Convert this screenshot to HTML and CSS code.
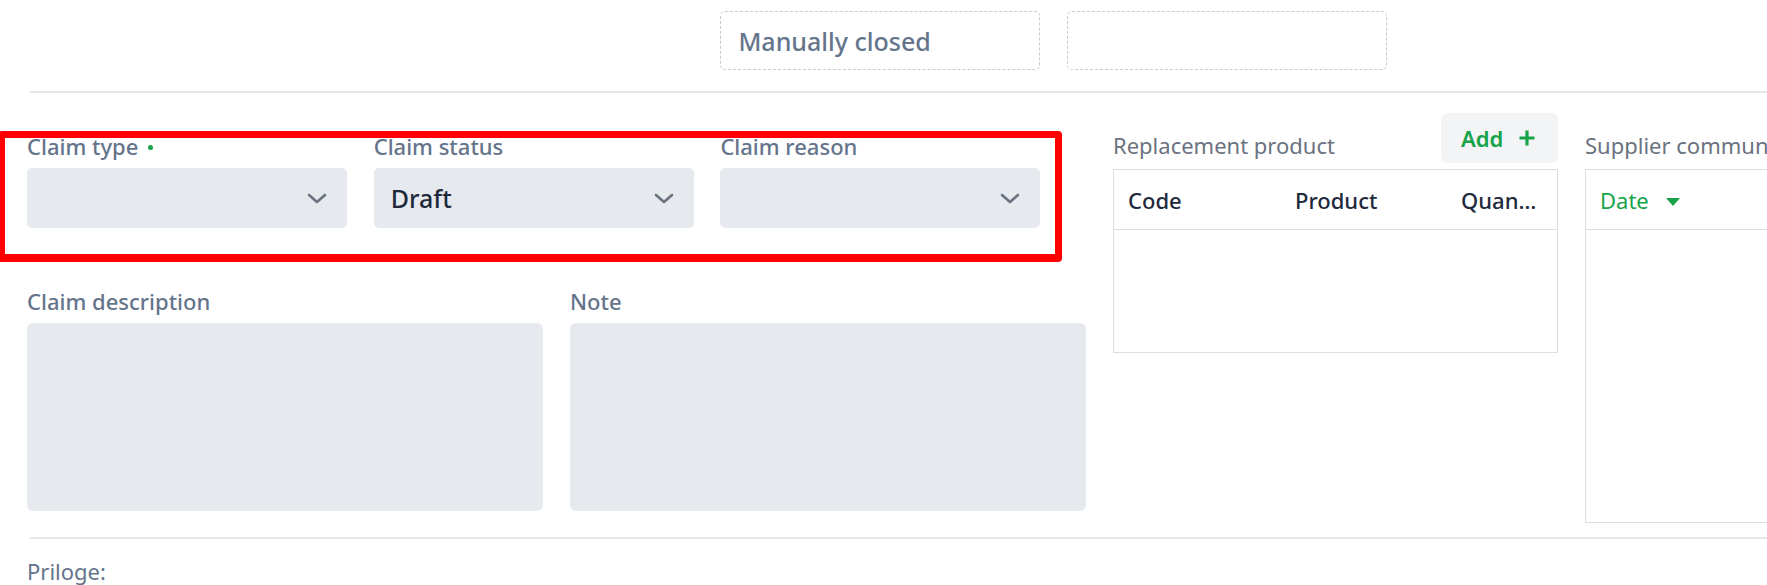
FILE: index.html
```html
<!DOCTYPE html>
<html lang="en">
<head>
<meta charset="utf-8">
<title>Claim</title>
<link rel="stylesheet" href="styles.css">
</head>
<body>
<div class="page">
  <div class="top-row">
    <div class="ro-box ro-box--c3">Manually closed</div>
    <div class="ro-box ro-box--c4"></div>
  </div>
  <div class="divider divider--top"></div>

  <div class="main">
    <div class="form">
      <div class="selects">
        <div class="field">
          <div class="label">Claim type<span class="req-dot"></span></div>
          <div class="select">
            <span class="select-value"></span>
            <svg class="chevron" width="20" height="11" viewBox="0 0 20 11"><path d="M2 2 L10 9 L18 2" fill="none" stroke="#6b7280" stroke-width="2.6" stroke-linecap="round" stroke-linejoin="round"/></svg>
          </div>
        </div>
        <div class="field">
          <div class="label">Claim status</div>
          <div class="select">
            <span class="select-value">Draft</span>
            <svg class="chevron" width="20" height="11" viewBox="0 0 20 11"><path d="M2 2 L10 9 L18 2" fill="none" stroke="#6b7280" stroke-width="2.6" stroke-linecap="round" stroke-linejoin="round"/></svg>
          </div>
        </div>
        <div class="field">
          <div class="label">Claim reason</div>
          <div class="select">
            <span class="select-value"></span>
            <svg class="chevron" width="20" height="11" viewBox="0 0 20 11"><path d="M2 2 L10 9 L18 2" fill="none" stroke="#6b7280" stroke-width="2.6" stroke-linecap="round" stroke-linejoin="round"/></svg>
          </div>
        </div>
      </div>
      <div class="texts">
        <div class="field">
          <div class="label">Claim description</div>
          <div class="textbox"></div>
        </div>
        <div class="field">
          <div class="label">Note</div>
          <div class="textbox"></div>
        </div>
      </div>
    </div>

    <div class="panel">
      <div class="panel-head">
        <span class="panel-title">Replacement product</span>
        <button class="add-btn">Add<svg width="18" height="18" viewBox="0 0 18 18"><path d="M9 1.5 V16.5 M1.5 9 H16.5" stroke="#16a34a" stroke-width="3.2" fill="none"/></svg></button>
      </div>
      <div class="grid">
        <div class="grid-head">
          <div class="cell cell--code">Code</div>
          <div class="cell cell--product">Product</div>
          <div class="cell cell--qty">Quantity</div>
        </div>
        <div class="grid-body grid-body--short"></div>
      </div>
    </div>

    <div class="panel panel--supplier">
      <div class="panel-head">
        <span class="panel-title">Supplier communication</span>
      </div>
      <div class="grid">
        <div class="grid-head">
          <div class="cell cell--date">Date<span class="sort-down"></span></div>
        </div>
        <div class="grid-body grid-body--tall"></div>
      </div>
    </div>
  </div>

  <div class="divider divider--bottom"></div>
  <div class="attachments">Priloge:</div>

  <div class="highlight"></div>
</div>
</body>
</html>
```

FILE: styles.css
```css
html, body {
  margin: 0;
  padding: 0;
  background: #ffffff;
  overflow: hidden;
}

body {
  font-family: "Noto Sans", "Open Sans", sans-serif;
  color: #1e293b;
}

.page {
  position: relative;
  padding-left: 27px;
  width: 2100px;
}

/* top read-only boxes */
.top-row {
  display: grid;
  grid-template-columns: repeat(4, 320px);
  column-gap: 26.7px;
  padding-top: 11px;
}

.ro-box {
  box-sizing: border-box;
  height: 59px;
  border: 1px dashed #c6cbd2;
  border-radius: 5px;
  padding-left: 17px;
  display: flex;
  align-items: center;
  font-size: 25px;
  font-weight: 500;
  color: #64748b;
}

.ro-box--c3 { grid-column: 3; }
.ro-box--c4 { grid-column: 4; }

.divider {
  height: 2px;
  background: #e5e7eb;
  margin-left: 3px;
}

.divider--top { margin-top: 21px; }
.divider--bottom { margin-top: 14px; }

/* main area */
.main {
  display: flex;
  align-items: flex-start;
  margin-top: 20px;
}

.form {
  flex: 0 0 1060px;
  min-width: 0;
  padding-top: 19px;
}

.selects {
  display: grid;
  grid-template-columns: repeat(3, 320px);
  column-gap: 26.7px;
}

.texts {
  display: grid;
  grid-template-columns: 516px 516px;
  column-gap: 27px;
  margin-top: 59px;
}

.label {
  font-size: 22px;
  line-height: 28px;
  font-weight: 500;
  color: #64748b;
  margin-bottom: 8px;
  white-space: nowrap;
}

.req-dot {
  display: inline-block;
  width: 5px;
  height: 5px;
  border-radius: 50%;
  background: #16a34a;
  margin-left: 10px;
  vertical-align: middle;
  position: relative;
  top: -2px;
}

.select {
  box-sizing: border-box;
  height: 60px;
  background: #e6e9ee;
  border-radius: 5px;
  padding: 0 20px 0 17px;
  display: flex;
  align-items: center;
  justify-content: space-between;
}

.select-value {
  font-size: 25px;
  font-weight: 500;
  color: #1e293b;
}

.chevron { display: block; flex: none; }

.textbox {
  height: 188px;
  background: #e6e9ee;
  border-radius: 6px;
}

/* side panels */
.panel {
  flex: 0 0 445px;
  min-width: 0;
  margin-left: 26px;
}

.panel--supplier { margin-left: 27px; }

.panel-head {
  height: 50px;
  display: flex;
  align-items: flex-end;
  justify-content: space-between;
}

.panel-title {
  font-size: 22px;
  line-height: 28px;
  color: #6b7280;
  margin-bottom: 4px;
  white-space: nowrap;
}

.add-btn {
  align-self: stretch;
  width: 117px;
  border: none;
  border-radius: 6px;
  background: #f3f4f6;
  display: flex;
  align-items: center;
  gap: 15px;
  padding: 0 0 0 20px;
  font-family: inherit;
  font-size: 22px;
  font-weight: 600;
  color: #16a34a;
}

.add-btn svg { display: block; }

.grid {
  margin-top: 6px;
  border: 1px solid #dcdee2;
}

.grid-head {
  display: flex;
  height: 59px;
  align-items: center;
  border-bottom: 1px solid #dcdee2;
}

.cell {
  box-sizing: border-box;
  padding: 0 14px;
  font-size: 22px;
  font-weight: 500;
  color: #1e293b;
  white-space: nowrap;
  overflow: hidden;
  text-overflow: ellipsis;
}

.cell--code { flex: 0 0 167px; }
.cell--product { flex: 0 0 166px; }
.cell--qty { flex: 1 1 0; min-width: 0; }

.cell--date {
  color: #16a34a;
  font-weight: 400;
  display: flex;
  align-items: center;
}

.sort-down {
  display: inline-block;
  width: 0;
  height: 0;
  border-left: 7px solid transparent;
  border-right: 7px solid transparent;
  border-top: 8px solid #16a34a;
  margin-left: 17px;
  margin-top: 5px;
}

.grid-body--short { height: 122px; }
.grid-body--tall { height: 292px; }

.attachments {
  margin-top: 18px;
  font-size: 22px;
  line-height: 28px;
  color: #64748b;
}

/* annotation overlay */
.highlight {
  position: absolute;
  left: -2px;
  top: 131px;
  width: 1064px;
  height: 131px;
  box-sizing: border-box;
  border: 7px solid #ff0000;
  border-bottom-width: 8px;
  border-radius: 4px;
}
```
